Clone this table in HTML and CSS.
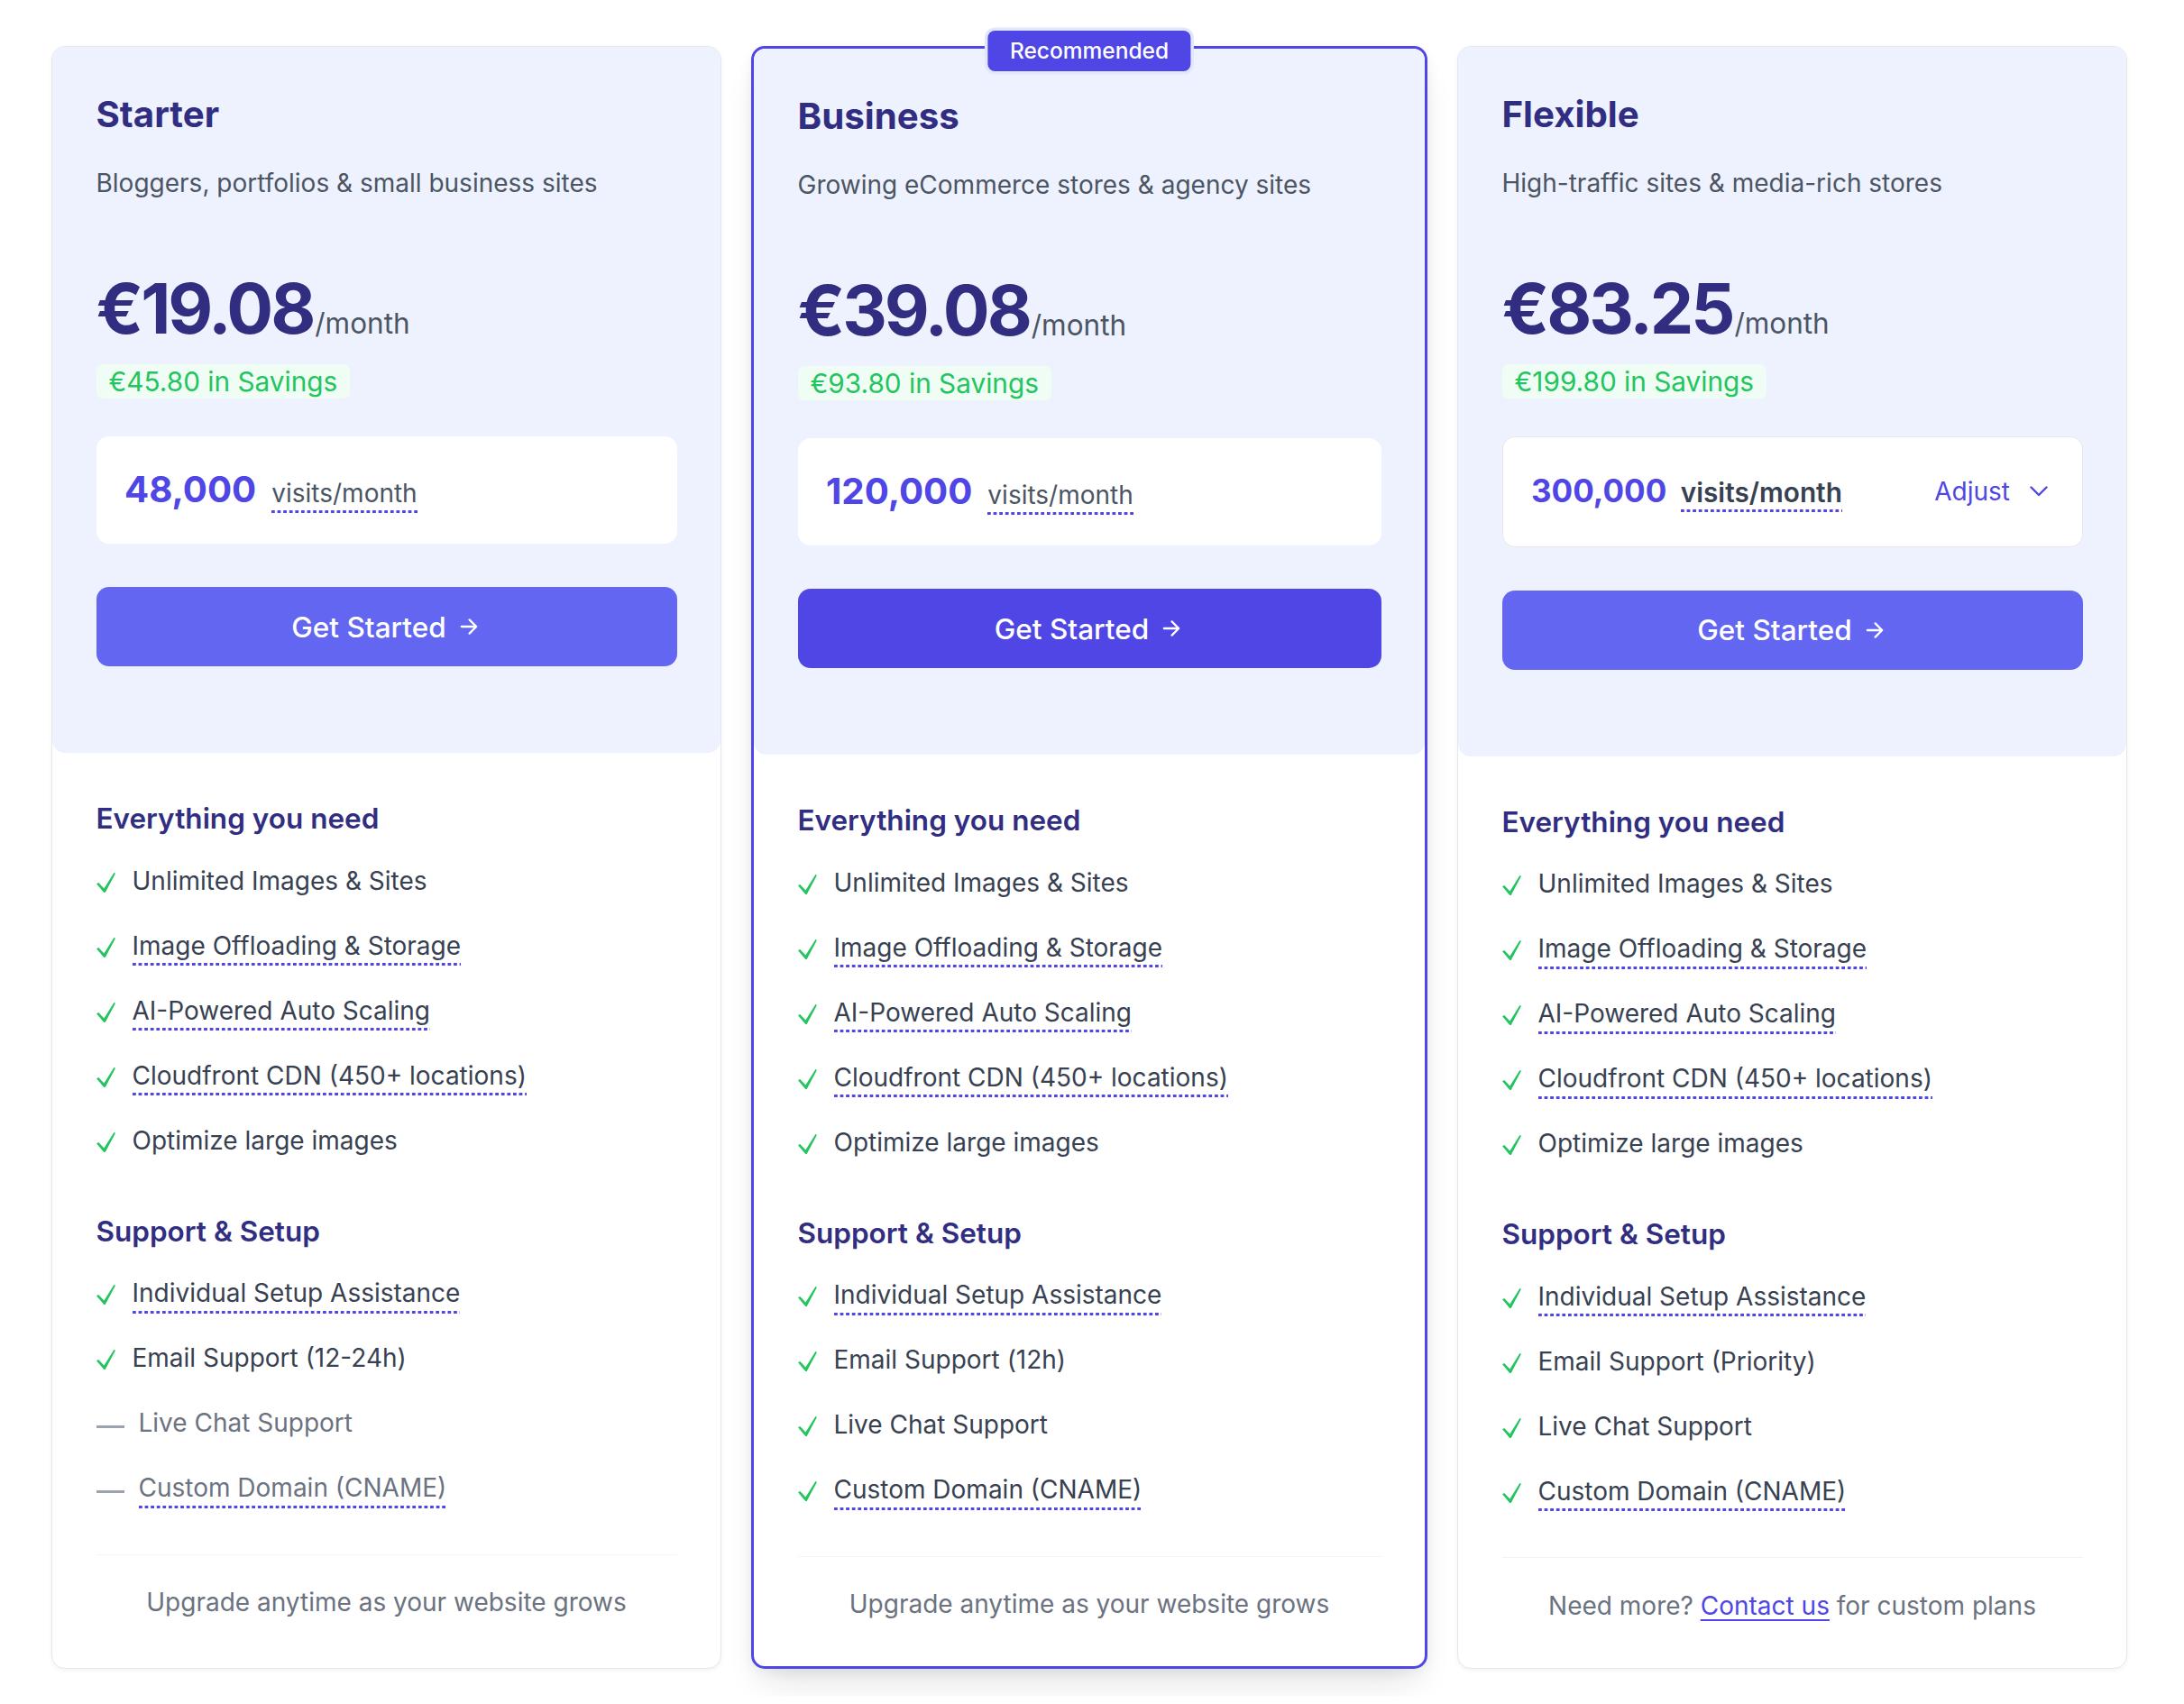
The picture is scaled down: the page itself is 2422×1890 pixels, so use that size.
FILE: index.html
```html
<!DOCTYPE html>
<html lang="en">
<head>
<meta charset="utf-8">
<title>Pricing plans</title>
<link rel="stylesheet" href="styles.css">
</head>
<body>
<main class="plans">

  <article class="plan">
    <div class="plan-top">
      <h2 class="plan-name">Starter</h2>
      <p class="plan-desc">Bloggers, portfolios &amp; small business sites</p>
      <div class="price"><span class="amount">€19.08</span><span class="per">/month</span></div>
      <div class="savings">€45.80 in Savings</div>
      <div class="visits">
        <div class="visits-main"><span class="visits-num">48,000</span><span class="visits-label tip">visits/month</span></div>
      </div>
      <a class="cta" href="#">Get Started
        <svg class="arrow" viewBox="0 0 24 24" width="28" height="28"><path d="M5 12h14M12.5 5.5 19 12l-6.5 6.5" fill="none" stroke="currentColor" stroke-width="2" stroke-linecap="round" stroke-linejoin="round"/></svg>
      </a>
    </div>
    <div class="plan-body">
      <h3 class="group-title">Everything you need</h3>
      <ul class="features">
        <li class="feature"><svg class="check" viewBox="0 0 21 22" width="21" height="22"><path d="M0 12.3 2.2 11 8.4 17.4 19.4 0 21 .8 9.7 22H8.3Z"/></svg><span>Unlimited Images &amp; Sites</span></li>
        <li class="feature"><svg class="check" viewBox="0 0 21 22" width="21" height="22"><path d="M0 12.3 2.2 11 8.4 17.4 19.4 0 21 .8 9.7 22H8.3Z"/></svg><span class="tip">Image Offloading &amp; Storage</span></li>
        <li class="feature"><svg class="check" viewBox="0 0 21 22" width="21" height="22"><path d="M0 12.3 2.2 11 8.4 17.4 19.4 0 21 .8 9.7 22H8.3Z"/></svg><span class="tip">AI-Powered Auto Scaling</span></li>
        <li class="feature"><svg class="check" viewBox="0 0 21 22" width="21" height="22"><path d="M0 12.3 2.2 11 8.4 17.4 19.4 0 21 .8 9.7 22H8.3Z"/></svg><span class="tip">Cloudfront CDN (450+ locations)</span></li>
        <li class="feature"><svg class="check" viewBox="0 0 21 22" width="21" height="22"><path d="M0 12.3 2.2 11 8.4 17.4 19.4 0 21 .8 9.7 22H8.3Z"/></svg><span>Optimize large images</span></li>
      </ul>
      <h3 class="group-title group-title--next">Support &amp; Setup</h3>
      <ul class="features">
        <li class="feature"><svg class="check" viewBox="0 0 21 22" width="21" height="22"><path d="M0 12.3 2.2 11 8.4 17.4 19.4 0 21 .8 9.7 22H8.3Z"/></svg><span class="tip">Individual Setup Assistance</span></li>
        <li class="feature"><svg class="check" viewBox="0 0 21 22" width="21" height="22"><path d="M0 12.3 2.2 11 8.4 17.4 19.4 0 21 .8 9.7 22H8.3Z"/></svg><span>Email Support (12-24h)</span></li>
        <li class="feature feature--off"><span class="dash"></span><span>Live Chat Support</span></li>
        <li class="feature feature--off"><span class="dash"></span><span class="tip">Custom Domain (CNAME)</span></li>
      </ul>
      <p class="plan-foot">Upgrade anytime as your website grows</p>
    </div>
  </article>

  <article class="plan plan--featured">
    <span class="badge">Recommended</span>
    <div class="plan-top">
      <h2 class="plan-name">Business</h2>
      <p class="plan-desc">Growing eCommerce stores &amp; agency sites</p>
      <div class="price"><span class="amount">€39.08</span><span class="per">/month</span></div>
      <div class="savings">€93.80 in Savings</div>
      <div class="visits">
        <div class="visits-main"><span class="visits-num">120,000</span><span class="visits-label tip">visits/month</span></div>
      </div>
      <a class="cta cta--strong" href="#">Get Started
        <svg class="arrow" viewBox="0 0 24 24" width="28" height="28"><path d="M5 12h14M12.5 5.5 19 12l-6.5 6.5" fill="none" stroke="currentColor" stroke-width="2" stroke-linecap="round" stroke-linejoin="round"/></svg>
      </a>
    </div>
    <div class="plan-body">
      <h3 class="group-title">Everything you need</h3>
      <ul class="features">
        <li class="feature"><svg class="check" viewBox="0 0 21 22" width="21" height="22"><path d="M0 12.3 2.2 11 8.4 17.4 19.4 0 21 .8 9.7 22H8.3Z"/></svg><span>Unlimited Images &amp; Sites</span></li>
        <li class="feature"><svg class="check" viewBox="0 0 21 22" width="21" height="22"><path d="M0 12.3 2.2 11 8.4 17.4 19.4 0 21 .8 9.7 22H8.3Z"/></svg><span class="tip">Image Offloading &amp; Storage</span></li>
        <li class="feature"><svg class="check" viewBox="0 0 21 22" width="21" height="22"><path d="M0 12.3 2.2 11 8.4 17.4 19.4 0 21 .8 9.7 22H8.3Z"/></svg><span class="tip">AI-Powered Auto Scaling</span></li>
        <li class="feature"><svg class="check" viewBox="0 0 21 22" width="21" height="22"><path d="M0 12.3 2.2 11 8.4 17.4 19.4 0 21 .8 9.7 22H8.3Z"/></svg><span class="tip">Cloudfront CDN (450+ locations)</span></li>
        <li class="feature"><svg class="check" viewBox="0 0 21 22" width="21" height="22"><path d="M0 12.3 2.2 11 8.4 17.4 19.4 0 21 .8 9.7 22H8.3Z"/></svg><span>Optimize large images</span></li>
      </ul>
      <h3 class="group-title group-title--next">Support &amp; Setup</h3>
      <ul class="features">
        <li class="feature"><svg class="check" viewBox="0 0 21 22" width="21" height="22"><path d="M0 12.3 2.2 11 8.4 17.4 19.4 0 21 .8 9.7 22H8.3Z"/></svg><span class="tip">Individual Setup Assistance</span></li>
        <li class="feature"><svg class="check" viewBox="0 0 21 22" width="21" height="22"><path d="M0 12.3 2.2 11 8.4 17.4 19.4 0 21 .8 9.7 22H8.3Z"/></svg><span>Email Support (12h)</span></li>
        <li class="feature"><svg class="check" viewBox="0 0 21 22" width="21" height="22"><path d="M0 12.3 2.2 11 8.4 17.4 19.4 0 21 .8 9.7 22H8.3Z"/></svg><span>Live Chat Support</span></li>
        <li class="feature"><svg class="check" viewBox="0 0 21 22" width="21" height="22"><path d="M0 12.3 2.2 11 8.4 17.4 19.4 0 21 .8 9.7 22H8.3Z"/></svg><span class="tip">Custom Domain (CNAME)</span></li>
      </ul>
      <p class="plan-foot">Upgrade anytime as your website grows</p>
    </div>
  </article>

  <article class="plan">
    <div class="plan-top">
      <h2 class="plan-name">Flexible</h2>
      <p class="plan-desc">High-traffic sites &amp; media-rich stores</p>
      <div class="price"><span class="amount">€83.25</span><span class="per">/month</span></div>
      <div class="savings">€199.80 in Savings</div>
      <div class="visits visits--bordered">
        <div class="visits-main visits-main--tight"><span class="visits-num visits-num--sm">300,000</span><span class="visits-label visits-label--strong tip">visits/month</span></div>
        <span class="adjust">Adjust
          <svg class="chevron" viewBox="0 0 20 12" width="20" height="12"><path d="M1.5 1.5 10 10l8.5-8.5" fill="none" stroke="currentColor" stroke-width="2.4" stroke-linecap="round" stroke-linejoin="round"/></svg>
        </span>
      </div>
      <a class="cta" href="#">Get Started
        <svg class="arrow" viewBox="0 0 24 24" width="28" height="28"><path d="M5 12h14M12.5 5.5 19 12l-6.5 6.5" fill="none" stroke="currentColor" stroke-width="2" stroke-linecap="round" stroke-linejoin="round"/></svg>
      </a>
    </div>
    <div class="plan-body">
      <h3 class="group-title">Everything you need</h3>
      <ul class="features">
        <li class="feature"><svg class="check" viewBox="0 0 21 22" width="21" height="22"><path d="M0 12.3 2.2 11 8.4 17.4 19.4 0 21 .8 9.7 22H8.3Z"/></svg><span>Unlimited Images &amp; Sites</span></li>
        <li class="feature"><svg class="check" viewBox="0 0 21 22" width="21" height="22"><path d="M0 12.3 2.2 11 8.4 17.4 19.4 0 21 .8 9.7 22H8.3Z"/></svg><span class="tip">Image Offloading &amp; Storage</span></li>
        <li class="feature"><svg class="check" viewBox="0 0 21 22" width="21" height="22"><path d="M0 12.3 2.2 11 8.4 17.4 19.4 0 21 .8 9.7 22H8.3Z"/></svg><span class="tip">AI-Powered Auto Scaling</span></li>
        <li class="feature"><svg class="check" viewBox="0 0 21 22" width="21" height="22"><path d="M0 12.3 2.2 11 8.4 17.4 19.4 0 21 .8 9.7 22H8.3Z"/></svg><span class="tip">Cloudfront CDN (450+ locations)</span></li>
        <li class="feature"><svg class="check" viewBox="0 0 21 22" width="21" height="22"><path d="M0 12.3 2.2 11 8.4 17.4 19.4 0 21 .8 9.7 22H8.3Z"/></svg><span>Optimize large images</span></li>
      </ul>
      <h3 class="group-title group-title--next">Support &amp; Setup</h3>
      <ul class="features">
        <li class="feature"><svg class="check" viewBox="0 0 21 22" width="21" height="22"><path d="M0 12.3 2.2 11 8.4 17.4 19.4 0 21 .8 9.7 22H8.3Z"/></svg><span class="tip">Individual Setup Assistance</span></li>
        <li class="feature"><svg class="check" viewBox="0 0 21 22" width="21" height="22"><path d="M0 12.3 2.2 11 8.4 17.4 19.4 0 21 .8 9.7 22H8.3Z"/></svg><span>Email Support (Priority)</span></li>
        <li class="feature"><svg class="check" viewBox="0 0 21 22" width="21" height="22"><path d="M0 12.3 2.2 11 8.4 17.4 19.4 0 21 .8 9.7 22H8.3Z"/></svg><span>Live Chat Support</span></li>
        <li class="feature"><svg class="check" viewBox="0 0 21 22" width="21" height="22"><path d="M0 12.3 2.2 11 8.4 17.4 19.4 0 21 .8 9.7 22H8.3Z"/></svg><span class="tip">Custom Domain (CNAME)</span></li>
      </ul>
      <p class="plan-foot">Need more? <a class="foot-link" href="#">Contact us</a> for custom plans</p>
    </div>
  </article>

</main>
</body>
</html>
```

FILE: styles.css
```css
* { box-sizing: border-box; }

html, body { background: #ffffff; }

body {
  margin: 0;
  font-family: Inter, "Noto Sans", "Liberation Sans", sans-serif;
  color: #374151;
}

.plans {
  display: grid;
  grid-template-columns: 743px 750px 743px;
  column-gap: 33px;
  align-items: stretch;
  padding: 51px 0 30px 57px;
}

.plan {
  position: relative;
  display: flex;
  flex-direction: column;
  background: #ffffff;
  border: 1.75px solid #e5e7eb;
  border-radius: 15px;
  box-shadow: 0 2px 5px rgba(17, 24, 39, 0.05);
}

.plan--featured {
  border: 3.5px solid #4f46e5;
  box-shadow: 0 22px 40px -14px rgba(17, 24, 39, 0.16), 0 4px 14px rgba(17, 24, 39, 0.05);
}

.badge {
  position: absolute;
  top: -20.5px;
  left: 50%;
  transform: translateX(-50%);
  height: 45px;
  padding: 0 24.5px;
  line-height: 45px;
  background: #4f46e5;
  color: #ffffff;
  font-size: 24.5px;
  font-weight: 500;
  border-radius: 8px;
  box-shadow: 0 0 0 3.5px #e0e7ff;
  white-space: nowrap;
}

.plan-top {
  display: flex;
  flex-direction: column;
  align-items: flex-start;
  padding: 49px 48.5px 96px;
  background: #eef2ff;
  border-radius: 14px;
}

.plan-name {
  margin: 0;
  font-size: 40.25px;
  line-height: 52.5px;
  font-weight: 700;
  color: #312e81;
}

.plan-desc {
  margin: 28px 0 0;
  font-size: 28px;
  line-height: 42px;
  color: #4b5563;
}

.price {
  display: flex;
  align-items: baseline;
  margin-top: 80px;
  line-height: 1;
}

.amount {
  font-size: 77px;
  font-weight: 700;
  letter-spacing: -0.04em;
  color: #312e81;
}

.per {
  margin-left: 2px;
  font-size: 31.5px;
  color: #4b5563;
}

.savings {
  margin-top: 23.5px;
  padding: 3.5px 14px;
  font-size: 29.75px;
  line-height: 31px;
  color: #22c55e;
  background: #f0fdf4;
  border-radius: 7px;
}

.visits {
  align-self: stretch;
  display: flex;
  align-items: center;
  height: 119px;
  margin-top: 42px;
  padding: 0 31.5px;
  background: #ffffff;
  border-radius: 14px;
}

.visits--bordered {
  height: 122.5px;
  border: 1.75px solid #e5e7eb;
}

.visits-main {
  display: flex;
  align-items: baseline;
  gap: 17px;
}

.visits-main--tight { gap: 15.5px; }

.visits-num {
  font-size: 40.25px;
  font-weight: 700;
  color: #4f46e5;
}

.visits-num--sm { font-size: 35px; }

.visits-label {
  font-size: 28px;
  color: #4b5563;
}

.visits-label--strong {
  font-size: 29.75px;
  font-weight: 600;
  color: #374151;
}

.adjust {
  display: flex;
  align-items: center;
  gap: 22px;
  margin-left: auto;
  margin-right: 6px;
  font-size: 28px;
  color: #4f46e5;
}

.chevron { flex: none; }

.tip {
  padding-bottom: 4.5px;
  background: linear-gradient(90deg, #4f46e5 4.2px, transparent 4.2px) repeat-x left bottom / 6.6px 2.6px;
}

.cta {
  align-self: stretch;
  display: flex;
  align-items: center;
  justify-content: center;
  gap: 11px;
  height: 88px;
  margin-top: 48px;
  background: #6366f1;
  color: #ffffff;
  font-size: 31.5px;
  font-weight: 500;
  text-decoration: none;
  border-radius: 14px;
}

.cta--strong { background: #4f46e5; }

.arrow { flex: none; }

.plan-body {
  flex: 1;
  display: flex;
  flex-direction: column;
  padding: 49px 48.5px 48px;
}

.group-title {
  margin: 0;
  font-size: 31.5px;
  line-height: 47px;
  font-weight: 600;
  color: #312e81;
}

.group-title--next { margin-top: 56px; }

.features {
  list-style: none;
  margin: 24.5px 0 0;
  padding: 0;
  display: flex;
  flex-direction: column;
  gap: 30px;
}

.feature {
  display: flex;
  align-items: flex-start;
  font-size: 28px;
  line-height: 42px;
  color: #374151;
}

.feature .tip {
  padding-bottom: 1.5px;
  margin-bottom: -1.5px;
}

.check {
  flex: none;
  margin: 12px 19px 0 0;
  fill: #22c55e;
}

.dash {
  flex: none;
  width: 31.5px;
  height: 2.5px;
  margin: 24px 15.5px 0 0;
  background: #9ca3af;
}

.feature--off { color: #6b7280; }

.plan-foot {
  margin: 52.5px 0 0;
  padding-top: 31.5px;
  border-top: 1.75px solid #f3f4f6;
  text-align: center;
  font-size: 28px;
  line-height: 42px;
  color: #6b7280;
}

.foot-link {
  color: #4f46e5;
  text-decoration: underline;
  text-decoration-thickness: 2px;
  text-underline-offset: 5px;
}
```
